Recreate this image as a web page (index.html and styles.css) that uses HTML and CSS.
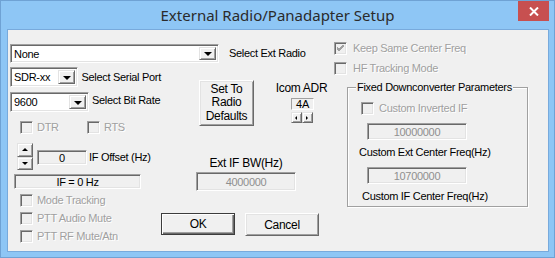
FILE: index.html
```html
<!DOCTYPE html>
<html lang="en">

<head>
    <meta charset="UTF-8">
    <title>External Radio/Panadapter Setup</title>
    <link rel="stylesheet" href="styles.css">
</head>

<body>
    <div class="window">
        <div class="titlebar">
            <div class="title">External Radio/Panadapter Setup</div>
            <div class="close">
                <svg width="10" height="9" viewBox="0 0 10 9">
                    <path d="M1 0.5 L9 8.5 M9 0.5 L1 8.5" stroke="#fff" stroke-width="2" fill="none"/>
                </svg>
            </div>
        </div>

        <div class="client">
            <div class="col-a">
                <div class="row-top">
                    <div class="combo combo-wide">
                        <span class="combo-text">None</span>
                        <span class="combo-btn"><i class="arrow-down"></i></span>
                    </div>
                    <span class="label ext-radio">Select Ext Radio</span>
                </div>

                <div class="col-a-body">
                    <div class="col-left">
                        <div class="field-row port-row">
                            <div class="combo combo-small">
                                <span class="combo-text">SDR-xx</span>
                                <span class="combo-btn"><i class="arrow-down"></i></span>
                            </div>
                            <span class="label side-label">Select Serial Port</span>
                        </div>
                        <div class="field-row rate-row">
                            <div class="combo combo-small">
                                <span class="combo-text">9600</span>
                                <span class="combo-btn"><i class="arrow-down"></i></span>
                            </div>
                            <span class="label side-label rate-label">Select Bit Rate</span>
                        </div>

                        <div class="check-row dtr-row">
                            <div class="check dtr"><span class="box"></span><span class="label disabled">DTR</span></div>
                            <div class="check"><span class="box"></span><span class="label disabled">RTS</span></div>
                        </div>

                        <div class="offset-row">
                            <div class="spin-v">
                                <span class="spin-btn"><i class="tri-up"></i></span>
                                <span class="spin-btn"><i class="tri-down"></i></span>
                            </div>
                            <div class="edit offset-edit">0</div>
                            <span class="label offset-label">IF Offset (Hz)</span>
                        </div>

                        <div class="edit if-box">IF = 0 Hz</div>

                        <div class="check-row first-opt">
                            <div class="check"><span class="box"></span><span class="label disabled">Mode Tracking</span></div>
                        </div>
                        <div class="check-row opt">
                            <div class="check"><span class="box"></span><span class="label disabled">PTT Audio Mute</span></div>
                        </div>
                        <div class="check-row opt">
                            <div class="check"><span class="box"></span><span class="label disabled">PTT RF Mute/Atn</span></div>
                        </div>
                    </div>

                    <div class="col-mid">
                        <div class="defaults-row">
                            <button class="btn defaults-btn">Set To<br>Radio<br>Defaults</button>
                            <div class="icom">
                                <span class="label icom-label">Icom ADR</span>
                                <div class="adr-box">4A</div>
                                <div class="spin-h">
                                    <span class="spin-btn small"><i class="tri-left"></i></span>
                                    <span class="spin-btn small"><i class="tri-right"></i></span>
                                </div>
                            </div>
                        </div>

                        <div class="bw">
                            <span class="label bw-label">Ext IF BW(Hz)</span>
                            <div class="edit bw-edit">4000000</div>
                        </div>

                        <div class="buttons">
                            <button class="btn btn-default ok-btn">OK</button>
                            <button class="btn cancel-btn">Cancel</button>
                        </div>
                    </div>
                </div>
            </div>

            <div class="col-b">
                <div class="check-row keep-row">
                    <div class="check">
                        <span class="box">
                            <svg width="7" height="7" viewBox="0 0 7 7">
                                <path d="M0 2 L2 4 L7 -1 M0 3 L2 5 L7 0 M0 4 L2 6 L7 1" stroke="#a0a0a0" stroke-width="1" fill="none"/>
                            </svg>
                        </span>
                        <span class="label disabled wide-gap">Keep Same Center Freq</span>
                    </div>
                </div>
                <div class="check-row hf-row">
                    <div class="check"><span class="box"></span><span class="label disabled wide-gap">HF Tracking Mode</span></div>
                </div>

                <div class="group">
                    <span class="group-title">Fixed Downconverter Parameters</span>
                    <div class="check-row inverted-row">
                        <div class="check"><span class="box"></span><span class="label disabled inv-label">Custom Inverted IF</span></div>
                    </div>
                    <div class="edit freq-edit">10000000</div>
                    <span class="label freq-label">Custom Ext Center Freq(Hz)</span>
                    <div class="edit freq-edit">10700000</div>
                    <span class="label freq-label if-label">Custom IF Center Freq(Hz)</span>
                </div>
            </div>
        </div>
    </div>
</body>

</html>
```

FILE: styles.css
```css
* {
    box-sizing: border-box;
}

body {
    margin: 0;
    font-family: "Liberation Sans", Arial, sans-serif;
    font-size: 11px;
    letter-spacing: -0.3px;
    color: #000;
}

.window {
    width: 555px;
    height: 258px;
    background-color: #8ec6f5;
    border: 1px solid #6fa2d4;
    display: flex;
    flex-direction: column;
}

.titlebar {
    height: 28px;
    display: flex;
}

.title {
    flex: 1;
    padding-left: 36px;
    text-align: center;
    line-height: 28px;
    font-family: "Noto Sans", "Open Sans", sans-serif;
    font-size: 15px;
    letter-spacing: 0;
    color: #2b2b2b;
}

.close {
    width: 31px;
    height: 20px;
    margin-right: 5px;
    background-color: #c75050;
    display: flex;
    justify-content: center;
    align-items: center;
}

.client {
    width: 542px;
    height: 223px;
    margin: 0 6px;
    background-color: #f0f0f0;
    border: 1px solid #78aadc;
    padding-left: 2px;
    display: flex;
}

/* shared controls */

.label {
    white-space: nowrap;
    line-height: 13px;
}

.disabled {
    color: #a0a0a0;
    text-shadow: 1px 1px #fff;
}

.sunken {
    border: 1px solid;
}

.combo {
    display: flex;
    background-color: #fff;
    border: 1px solid;
    border-color: #a0a0a0 #fff #fff #a0a0a0;
    box-shadow: inset 1px 1px #696969, inset -1px -1px #e3e3e3;
    padding: 2px;
}

.combo-text {
    flex: 1;
    padding-left: 1px;
    line-height: 14px;
}

.combo-btn {
    width: 17px;
    background-color: #f0f0f0;
    border: 1px solid;
    border-color: #e3e3e3 #696969 #696969 #e3e3e3;
    box-shadow: inset 1px 1px #fff, inset -1px -1px #a0a0a0;
    display: flex;
    justify-content: center;
    align-items: center;
}

.arrow-down {
    border-left: 4px solid transparent;
    border-right: 4px solid transparent;
    border-top: 4px solid #000;
    margin-top: 1px;
}

.combo-wide {
    width: 209px;
    height: 19px;
}

.combo-small {
    width: 79px;
    height: 20px;
}

.edit {
    background-color: #f0f0f0;
    border: 1px solid;
    border-color: #a0a0a0 #fff #fff #a0a0a0;
    box-shadow: inset 1px 1px #696969, inset -1px -1px #e3e3e3;
    text-align: center;
    display: flex;
    justify-content: center;
    align-items: center;
}

.check-row {
    display: flex;
    height: 13px;
}

.check {
    display: flex;
    align-items: center;
}

.box {
    width: 13px;
    height: 13px;
    background-color: #f0f0f0;
    border: 1px solid;
    border-color: #a0a0a0 #fff #fff #a0a0a0;
    box-shadow: inset 1px 1px #696969, inset -1px -1px #e3e3e3;
    display: flex;
    justify-content: center;
    align-items: center;
}

.check .label {
    margin-left: 4px;
}

.btn {
    font-family: inherit;
    font-size: 11px;
    letter-spacing: -0.3px;
    background-color: #f0f0f0;
    border: 1px solid;
    border-color: #fff #696969 #696969 #fff;
    box-shadow: inset 1px 1px #e3e3e3, inset -1px -1px #a0a0a0;
    padding: 0;
    color: #000;
}

.btn-default {
    border: 1px solid #3c3c3c;
    box-shadow: inset 1px 1px #fff, inset -1px -1px #696969, inset -2px -2px #a0a0a0;
}

.spin-btn {
    background-color: #f0f0f0;
    border: 1px solid;
    border-color: #e3e3e3 #696969 #696969 #e3e3e3;
    box-shadow: inset 1px 1px #fff, inset -1px -1px #a0a0a0;
    display: flex;
    justify-content: center;
    align-items: center;
}

.tri-up {
    border-left: 3px solid transparent;
    border-right: 3px solid transparent;
    border-bottom: 3px solid #000;
}

.tri-down {
    border-left: 3px solid transparent;
    border-right: 3px solid transparent;
    border-top: 3px solid #000;
}

.tri-left {
    border-top: 2px solid transparent;
    border-bottom: 2px solid transparent;
    border-right: 2px solid #000;
}

.tri-right {
    border-top: 2px solid transparent;
    border-bottom: 2px solid transparent;
    border-left: 2px solid #000;
}

/* left and middle part */

.col-a {
    width: 324px;
    display: flex;
    flex-direction: column;
}

.row-top {
    margin-top: 14px;
    display: flex;
    align-items: center;
}

.ext-radio {
    margin-left: 10px;
}

.col-a-body {
    display: flex;
}

.col-left {
    width: 151px;
    display: flex;
    flex-direction: column;
}

.field-row {
    display: flex;
    align-items: center;
}

.port-row {
    margin-top: 4px;
}

.rate-row {
    margin-top: 5px;
}

.side-label {
    margin-left: 3px;
}

.rate-label {
    margin-top: -3px;
}

.dtr-row {
    margin-top: 9px;
    padding-left: 10px;
}

.dtr {
    width: 67px;
}

.offset-row {
    margin-top: 9px;
    display: flex;
    align-items: center;
}

.spin-v {
    width: 16px;
    height: 27px;
    margin-left: 7px;
    display: flex;
    flex-direction: column;
}

.spin-v .spin-btn {
    flex: 1;
}

.offset-edit {
    width: 50px;
    height: 15px;
    margin-left: 4px;
    margin-top: 2px;
}

.offset-label {
    margin-left: 2px;
    margin-top: 2px;
}

.if-box {
    width: 127px;
    height: 15px;
    margin-top: 4px;
    margin-left: 4px;
}

.first-opt {
    margin-top: 5px;
    padding-left: 10px;
}

.opt {
    margin-top: 5px;
    padding-left: 10px;
}

.col-mid {
    flex: 1;
    display: flex;
    flex-direction: column;
}

.defaults-row {
    margin-top: 17px;
    display: flex;
}

.defaults-btn {
    width: 55px;
    height: 46px;
    margin-left: 38px;
    line-height: 13.5px;
    font-size: 12px;
}

.icom {
    width: 49px;
    margin-left: 23px;
    display: flex;
    flex-direction: column;
    align-items: center;
}

.icom-label {
    margin-top: 2px;
    font-size: 12px;
}

.adr-box {
    width: 23px;
    height: 12px;
    margin-top: 3px;
    margin-left: 2px;
    border: 1px solid;
    border-color: #a0a0a0 #fff #fff #a0a0a0;
    text-align: center;
    line-height: 10px;
}

.spin-h {
    width: 22px;
    height: 11px;
    margin-top: 2px;
    display: flex;
}

.spin-h .spin-btn {
    flex: 1;
}

.bw {
    width: 100px;
    margin-top: 31px;
    margin-left: 35px;
    display: flex;
    flex-direction: column;
    align-items: center;
}

.bw-label {
    font-size: 12px;
}

.bw-edit {
    width: 100px;
    height: 19px;
    margin-top: 2px;
    color: #8f8f8f;
}

.buttons {
    margin-top: 22px;
    display: flex;
    align-items: flex-start;
}

.ok-btn {
    width: 74px;
    height: 22px;
    font-size: 12px;
}

.cancel-btn {
    width: 74px;
    height: 23px;
    margin-left: 10px;
    font-size: 12px;
}

/* right part */

.col-b {
    flex: 1;
    display: flex;
    flex-direction: column;
}

.keep-row {
    margin-top: 12px;
}

.hf-row {
    margin-top: 7px;
}

.check .wide-gap {
    margin-left: 6px;
}

.group {
    position: relative;
    width: 181px;
    height: 120px;
    margin-top: 12px;
    margin-left: 13px;
    border: 1px solid #a0a0a0;
    box-shadow: inset 1px 1px #fff, 1px 1px #fff;
    display: flex;
    flex-direction: column;
    align-items: flex-start;
}

.group-title {
    position: absolute;
    top: -7px;
    left: 8px;
    padding: 0 1px;
    background-color: #f0f0f0;
    line-height: 13px;
    white-space: nowrap;
}

.inverted-row {
    margin-top: 14px;
    margin-left: 13px;
}

.check .inv-label {
    margin-left: 5px;
}

.freq-edit {
    width: 100px;
    height: 17px;
    margin-top: 8px;
    margin-left: 19px;
    color: #8f8f8f;
}

.freq-label {
    margin-top: 6px;
    margin-left: 11px;
}

.if-label {
    margin-left: 14px;
}
```
